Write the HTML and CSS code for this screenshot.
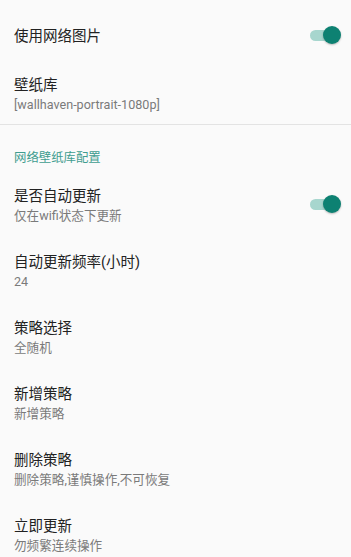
FILE: index.html
```html
<!DOCTYPE html>
<html>

<head>
    <meta charset="utf-8">
    <title>设置</title>
    <link rel="stylesheet" href="styles.css">
</head>

<body>
    <div class="prefs">
        <div class="pref pref-first">
            <div class="pref-text">
                <div class="pref-title">使用网络图片</div>
            </div>
            <div class="switch on"><span class="thumb"></span></div>
        </div>

        <div class="pref pref-short">
            <div class="pref-text">
                <div class="pref-title">壁纸库</div>
                <div class="pref-summary">[wallhaven-portrait-1080p]</div>
            </div>
        </div>

        <div class="divider"></div>

        <div class="category">网络壁纸库配置</div>

        <div class="pref">
            <div class="pref-text">
                <div class="pref-title">是否自动更新</div>
                <div class="pref-summary">仅在wifi状态下更新</div>
            </div>
            <div class="switch on"><span class="thumb"></span></div>
        </div>

        <div class="pref">
            <div class="pref-text">
                <div class="pref-title">自动更新频率(小时)</div>
                <div class="pref-summary">24</div>
            </div>
        </div>

        <div class="pref">
            <div class="pref-text">
                <div class="pref-title">策略选择</div>
                <div class="pref-summary">全随机</div>
            </div>
        </div>

        <div class="pref">
            <div class="pref-text">
                <div class="pref-title">新增策略</div>
                <div class="pref-summary">新增策略</div>
            </div>
        </div>

        <div class="pref">
            <div class="pref-text">
                <div class="pref-title">删除策略</div>
                <div class="pref-summary">删除策略,谨慎操作,不可恢复</div>
            </div>
        </div>

        <div class="pref">
            <div class="pref-text">
                <div class="pref-title">立即更新</div>
                <div class="pref-summary">勿频繁连续操作</div>
            </div>
        </div>
    </div>
</body>

</html>
```

FILE: styles.css
```css
html,
body {
    margin: 0;
    height: 100%;
    overflow: hidden;
}

body {
    font-family: Roboto, "Noto Sans CJK SC", sans-serif;
    background-color: #fafafa;
}

.prefs {
    display: flex;
    flex-direction: column;
}

.pref {
    display: flex;
    align-items: center;
    height: 66px;
    padding: 0 14px;
    box-sizing: border-box;
}

.pref-first {
    height: 62px;
    padding-top: 8px;
}

.pref-short {
    height: 62px;
}

.pref-text {
    flex: 1;
    min-width: 0;
    padding-top: 4px;
}

.pref-title {
    font-size: 14.5px;
    line-height: 20px;
    color: #222;
}

.pref-summary {
    font-size: 12.6px;
    line-height: 18px;
    color: #7a7a7a;
}

.divider {
    height: 1px;
    background-color: #e3e3e3;
}

.category {
    height: 46px;
    box-sizing: border-box;
    padding: 0 14px 5px;
    display: flex;
    align-items: flex-end;
    font-size: 12.4px;
    line-height: 16px;
    color: #3f9d90;
}

.switch {
    position: relative;
    width: 26px;
    height: 11px;
    border-radius: 6px;
    background-color: #a7d6ce;
    margin-right: 1px;
}

.switch .thumb {
    position: absolute;
    right: -5px;
    top: -4px;
    width: 18px;
    height: 18px;
    border-radius: 50%;
    background-color: #0d8172;
    box-shadow: 0 1px 2px rgba(0, 0, 0, 0.25);
}
```
